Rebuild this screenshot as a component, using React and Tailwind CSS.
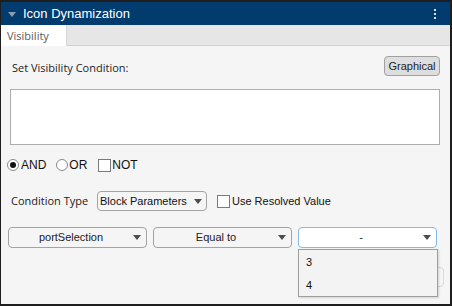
import React from 'react';

const arial = { fontFamily: '"Liberation Sans", Arial, sans-serif' };
const segoe = { fontFamily: '"Open Sans", "Noto Sans", sans-serif' };

const Caret = ({ className = '' }) => (
    <svg width="8" height="5" viewBox="0 0 8 5" className={className}>
        <path d="M0 0 L8 0 L4 5 Z" fill="#4d4d4d" />
    </svg>
);

const Dropdown = ({ label, className = '', active = false }) => (
    <div
        className={`flex items-center h-[21px] rounded-[4px] border ${active ? 'border-[#86b9e6] bg-white' : 'border-[#a3a3a3] bg-[#f5f5f5]'} ${className}`}
        style={arial}
    >
        <span className="flex-1 text-center text-[11px] text-[#222] leading-none">{label}</span>
        <Caret className="mr-[5px] shrink-0" />
    </div>
);

const Radio = ({ checked }) => (
    <span className="w-[12px] h-[12px] rounded-full border border-[#8a8a8a] bg-white flex items-center justify-center">
        {checked && <span className="w-[6px] h-[6px] rounded-full bg-[#111]" />}
    </span>
);

const Check = () => <span className="w-[13px] h-[13px] border border-[#7a7a7a] bg-white" />;

export default function App() {
    return (
        <div className="w-[452px] h-[306px] bg-[#f5f5f5] border-t-2 border-l border-r-2 border-b-2 border-[#1e1e1e] flex flex-col overflow-hidden">
            {/* Header */}
            <div className="h-[23px] bg-[#023b6e] flex items-center shrink-0" style={arial}>
                <svg width="8" height="5" viewBox="0 0 8 5" className="ml-[7px] mt-[1px]">
                    <path d="M0 0 L8 0 L4 5 Z" fill="#8b9db1" />
                </svg>
                <span className="ml-[7px] text-white text-[13px] leading-none">Icon Dynamization</span>
                <div className="ml-auto mr-[14px] flex flex-col gap-[2px]">
                    <span className="w-[2px] h-[2px] bg-[#d8e4f0]" />
                    <span className="w-[2px] h-[2px] bg-[#d8e4f0]" />
                    <span className="w-[2px] h-[2px] bg-[#d8e4f0]" />
                </div>
            </div>

            {/* Tabs */}
            <div className="h-[21px] bg-[#e6e6e6] border-b border-[#d2d2d2] flex shrink-0">
                <div className="w-[66px] h-[21px] bg-white flex items-center pl-[6px] border-r border-[#d6d6d6]" style={segoe}>
                    <span className="text-[11px] text-[#5a5a5a] leading-none">Visibility</span>
                </div>
            </div>

            {/* Content */}
            <div className="relative flex-1 flex flex-col">
                <div className="mt-[10px] h-[20px] flex items-center justify-between pl-[11px] pr-[10px]">
                    <span className="text-[11px] text-[#222] mt-[5px]" style={segoe}>Set Visibility Condition:</span>
                    <button className="w-[56px] h-[20px] rounded-[4px] border border-[#a0a0a0] bg-[#dedede] text-[11px] text-[#222] leading-none" style={arial}>
                        Graphical
                    </button>
                </div>

                <div className="mt-[13px] ml-[9px] mr-[10px] h-[56px] bg-white border border-[#adadad]" />

                <div className="mt-[13px] ml-[6px] h-[14px] flex items-center text-[12px] text-[#111]" style={arial}>
                    <Radio checked />
                    <span className="ml-[2px]">AND</span>
                    <span className="ml-[10px]"><Radio /></span>
                    <span className="ml-[1px]">OR</span>
                    <span className="ml-[11px] flex"><Check /></span>
                    <span className="ml-[1px]">NOT</span>
                </div>

                <div className="mt-[19px] h-[20px] flex items-center">
                    <span className="ml-[10px] w-[86px] text-[11px] text-[#222]" style={segoe}>Condition Type</span>
                    <div className="w-[110px] h-[20px] rounded-[4px] border border-[#a3a3a3] flex items-center pl-[2px]" style={arial}>
                        <span className="flex-1 text-[11px] text-[#111] leading-none">Block Parameters</span>
                        <Caret className="mr-[4px]" />
                    </div>
                    <span className="ml-[10px] flex"><Check /></span>
                    <span className="ml-[2px] text-[11px] text-[#111]" style={arial}>Use Resolved Value</span>
                </div>

                <div className="mt-[16px] ml-[7px] flex gap-[6px]">
                    <Dropdown label="portSelection" className="w-[139px]" />
                    <Dropdown label="Equal to" className="w-[139px]" />
                    <Dropdown label="-" className="w-[139px]" active />
                </div>

                {/* button partly hidden behind the open list */}
                <div className="absolute left-[430px] top-[221px] w-[13px] h-[20px] rounded-[4px] border border-[#dadada]" />

                {/* open list */}
                <div className="absolute left-[297px] top-[203px] w-[140px] h-[48px] bg-[#f3f3f3] border border-[#9e9e9e] shadow-[1px_1px_2px_rgba(0,0,0,0.15)] flex flex-col text-[11px] text-[#111]" style={arial}>
                    <span className="pl-[7px] mt-[7px] leading-none">3</span>
                    <span className="pl-[7px] mt-[12px] leading-none">4</span>
                </div>
            </div>
        </div>
    );
}
